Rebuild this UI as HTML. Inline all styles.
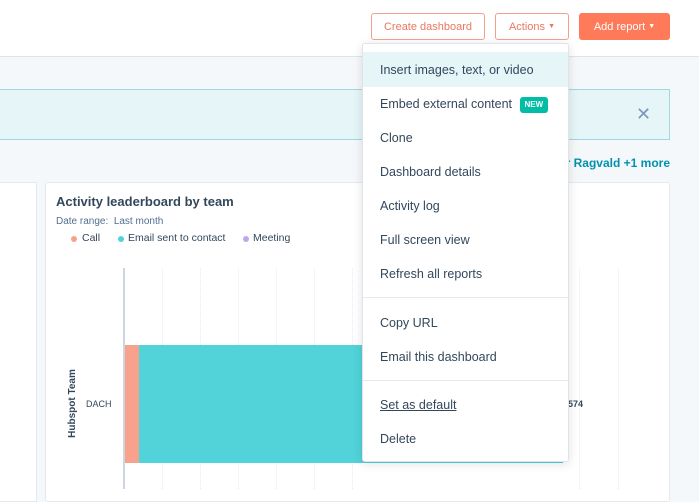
<!DOCTYPE html>
<html><head><meta charset="utf-8"><style>
*{margin:0;padding:0;box-sizing:border-box}
body{width:699px;height:489px;overflow:hidden;background:#f5f8fa;font-family:"Liberation Sans",sans-serif;position:relative;color:#33475b}
.abs{position:absolute}
.btn{position:absolute;top:13px;height:27px;border-radius:3px;font-size:11px;display:flex;align-items:center;justify-content:center}
.menu{position:absolute;left:362px;top:43px;width:207px;height:419px;background:#fff;border:1px solid #dfe3eb;border-radius:3px;box-shadow:0 2px 10px rgba(0,0,0,.12)}
.it{position:absolute;left:17px;font-size:12.5px;color:#33475b;line-height:16px}
.div{position:absolute;left:0;right:0;height:1px;background:#e5e9ef}
.grid{position:absolute;top:268px;height:221px;border-left:1px dotted #e6ebf0}
.dot{position:absolute;top:236px;width:6px;height:6px;border-radius:50%}
.lg{position:absolute;top:232px;font-size:10.5px;color:#33475b;white-space:nowrap}
</style></head><body>
<div class="abs" style="left:0;top:0;width:699px;height:57px;background:#fff;border-bottom:1px solid #dfe3eb"></div>
<div class="btn" style="left:371px;width:114px;border:1px solid #f2a18e;color:#e9785f;background:#fff">Create dashboard</div>
<div class="btn" style="left:495px;width:74px;border:1px solid #f2a18e;color:#e9785f;background:#fff">Actions&nbsp;<span style="font-size:7px">▼</span></div>
<div class="btn" style="left:579px;width:91px;background:#ff7a59;color:#fff">Add report&nbsp;<span style="font-size:7px">▼</span></div>
<div class="abs" style="left:0;top:89px;width:670px;height:51px;background:#e5f5f8;border:1px solid #9fd7e2;border-left:none"></div>
<div class="abs" style="left:636px;top:104px;font-size:18px;color:#7c98b6">✕</div>
<div class="abs" style="left:560px;top:156px;width:110px;text-align:right;font-size:12px;font-weight:bold;color:#0091ae">r Ragvald +1 more</div>
<div class="abs" style="left:0;top:182px;width:37px;height:320px;background:#fff;border:1px solid #e5e9ef;border-left:none"></div>
<div class="abs" style="left:45px;top:182px;width:625px;height:320px;background:#fff;border:1px solid #e5e9ef;border-radius:3px"></div>
<div class="abs" style="left:56px;top:194px;font-size:13px;font-weight:bold">Activity leaderboard by team</div>
<div class="abs" style="left:56px;top:216px;font-size:10px;color:#516f90">Date range:&nbsp; Last month</div>
<div class="dot" style="left:71px;background:#f8a28d"></div><div class="lg" style="left:82px">Call</div>
<div class="dot" style="left:118px;background:#51d3d9"></div><div class="lg" style="left:128px">Email sent to contact</div>
<div class="dot" style="left:243px;background:#bda9ea"></div><div class="lg" style="left:253px">Meeting</div>
<div class="grid" style="left:162px"></div><div class="grid" style="left:200px"></div><div class="grid" style="left:238px"></div><div class="grid" style="left:276px"></div><div class="grid" style="left:314px"></div><div class="grid" style="left:352px"></div><div class="grid" style="left:579px"></div><div class="grid" style="left:618px"></div>
<div class="abs" style="left:123px;top:268px;width:2px;height:221px;background:#cbd6e2"></div>
<div class="abs" style="left:125px;top:345px;width:14px;height:118px;background:#f8a28d"></div>
<div class="abs" style="left:139px;top:345px;width:424px;height:118px;background:#51d3d9"></div>
<div class="abs" style="left:86px;top:399px;font-size:9px">DACH</div>
<div class="abs" style="left:38px;top:398px;font-size:10px;font-weight:bold;transform:rotate(-90deg);white-space:nowrap">Hubspot Team</div>
<div class="abs" style="left:568px;top:399px;font-size:9px;font-weight:bold">574</div>
<div class="menu">
<div class="abs" style="left:0;top:8px;width:205px;height:35px;background:#e5f5f8"></div>
<div class="it" style="top:18px">Insert images, text, or video</div>
<div class="it" style="top:52px">Embed external content <span style="display:inline-block;background:#00bda5;color:#fff;font-size:8px;font-weight:bold;padding:3px 5px;line-height:10px;border-radius:3px;margin-left:4px;vertical-align:1px">NEW</span></div>
<div class="it" style="top:86px">Clone</div>
<div class="it" style="top:120px">Dashboard details</div>
<div class="it" style="top:154px">Activity log</div>
<div class="it" style="top:188px">Full screen view</div>
<div class="it" style="top:222px">Refresh all reports</div>
<div class="div" style="top:253px"></div>
<div class="it" style="top:271px">Copy URL</div>
<div class="it" style="top:305px">Email this dashboard</div>
<div class="div" style="top:336px"></div>
<div class="it" style="top:353px;text-decoration:underline">Set as default</div>
<div class="it" style="top:387px">Delete</div>
</div>
</body></html>
